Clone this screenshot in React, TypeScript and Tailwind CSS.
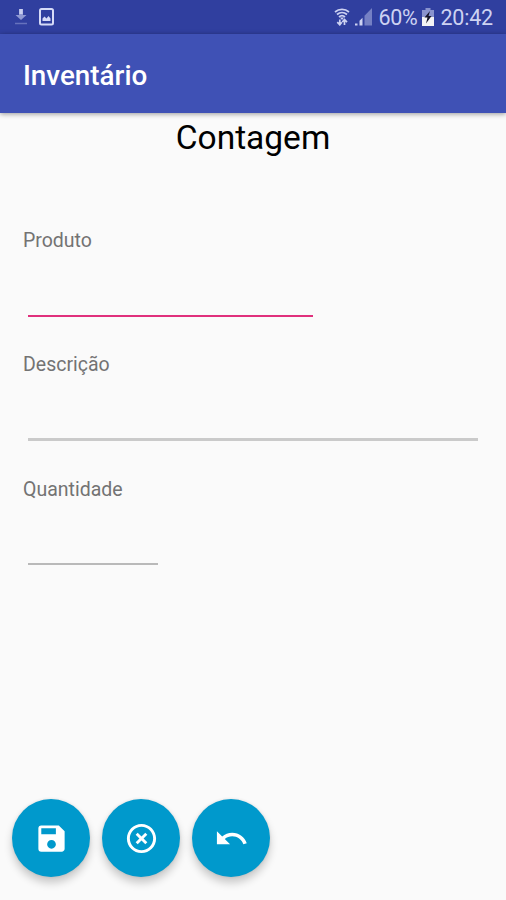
import React from 'react';
import { MdHighlightOff, MdSave, MdUndo } from 'react-icons/md';

const StatusBar: React.FC = () => (
  <div className="flex h-[34px] items-center justify-between bg-[#303f9f] pl-[14px] pr-[13px] text-[#cdd2f2]">
    <div className="flex items-center gap-[11px]">
      <svg width="14" height="18" viewBox="0 0 14 18">
        <path d="M5 1h4v6h3.500L7 12 1.500 7H5z" fill="#8f99d3" />
        <path d="M5.300 1h3.400v5H5.300z" fill="#c9cff0" />
        <path d="M1 15.500h12" stroke="#6672bd" strokeWidth="1.500" />
      </svg>
      <svg width="15" height="18" viewBox="0 0 15 18" fill="none">
        <rect x="1" y="1" width="13" height="15.500" rx="1.500" stroke="#d6dbf7" strokeWidth="2" />
        <path d="M3.500 13V10.500l2-2 2 2 2-2.500 2 2.500V13z" fill="#d6dbf7" />
      </svg>
    </div>
    <div className="flex items-center">
      <svg width="16" height="18" viewBox="0 0 16 18" fill="none" stroke="currentColor" strokeWidth="1.700">
        <path d="M1 4c4-3.500 10-3.500 14 0M3 6.500c3-2.600 7-2.600 10 0M5 9c1.800-1.600 4.200-1.600 6 0" />
        <path d="M6 9.500h4L8 12z" fill="currentColor" stroke="none" />
        <path d="M5.800 11.500v5M3.300 14.200l2.500 2.600 2-2.500M10.500 17v-5M8.300 14l2.200-2.500 2.500 2.700" />
      </svg>
      <svg className="ml-[5px]" width="17" height="18" viewBox="0 0 17 18">
        <path d="M9.500 7.700L17 0v17.500H9.500z" fill="#7580c4" />
        <path d="M0 15.500h2.500v2H0zM4.500 12.800l3-3v7.700h-3z" fill="#cdd2f2" />
      </svg>
      <span className="ml-[6px] w-[41px] whitespace-nowrap pt-0.5 text-[21.500px] leading-8 tracking-[-0.3px]">60%</span>
      <svg className="ml-[3px] mr-[6px]" width="12" height="18" viewBox="0 0 12 18">
        <path d="M3.500 0h5v2H12v16H0V2h3.500z" fill="#8993ce" />
        <path d="M0 9h12v9H0z" fill="#f3f3f5" />
        <path d="M8 3L2.500 9.500h3L4 15.500 9.500 8h-3z" fill="#15152a" />
      </svg>
      <span className="pt-0.5 text-[21.500px] leading-8 tracking-[-0.2px]">20:42</span>
    </div>
  </div>
);

type FieldProps = {
  label: string;
  line: string;
};

const Field: React.FC<FieldProps> = ({ label, line }) => (
  <label className="block h-[124.300px]">
    <span className="block text-[19.500px] leading-6 text-[#737373]">{label}</span>
    <input
      type="text"
      className={`ml-[5px] block bg-transparent text-xl outline-none ${line}`}
    />
  </label>
);

type FabProps = {
  label: string;
  children: React.ReactNode;
};

const Fab: React.FC<FabProps> = ({ label, children }) => (
  <button
    type="button"
    aria-label={label}
    className="flex size-[78px] items-center justify-center rounded-full bg-[#0099cc] text-[35px] text-white shadow-[0_6px_9px_rgba(0,0,0,0.2),0_0_3px_rgba(0,0,0,0.1)]"
  >
    {children}
  </button>
);

export default function App() {
  return (
    <div className="flex h-screen flex-col bg-[#fafafa] font-['Roboto',sans-serif]">
      <StatusBar />
      <header className="flex h-[79px] items-center bg-[#3f51b5] px-[23px] pt-[5px] shadow-[0_1px_5px_rgba(0,0,0,0.4)]">
        <h1 className="text-[27.800px] font-medium leading-8 text-white">Inventário</h1>
      </header>
      <main className="flex-1 px-[23px] pt-[5px]">
        <h2 className="text-center text-[33.500px] leading-10 text-black">Contagem</h2>
        <form className="pt-[71px]">
          <Field label="Produto" line="h-16 w-[285px] border-b-2 border-[#e0307c]" />
          <Field label="Descrição" line="h-16 w-[450px] border-b-[3px] border-[#cacaca]" />
          <Field label="Quantidade" line="h-[63px] w-[130px] border-b-2 border-[#b9b9b9]" />
        </form>
      </main>
      <footer className="flex gap-3 pb-[23px] pl-3">
        <Fab label="Salvar">
          <MdSave />
        </Fab>
        <Fab label="Cancelar">
          <MdHighlightOff />
        </Fab>
        <Fab label="Desfazer">
          <MdUndo />
        </Fab>
      </footer>
    </div>
  );
}
